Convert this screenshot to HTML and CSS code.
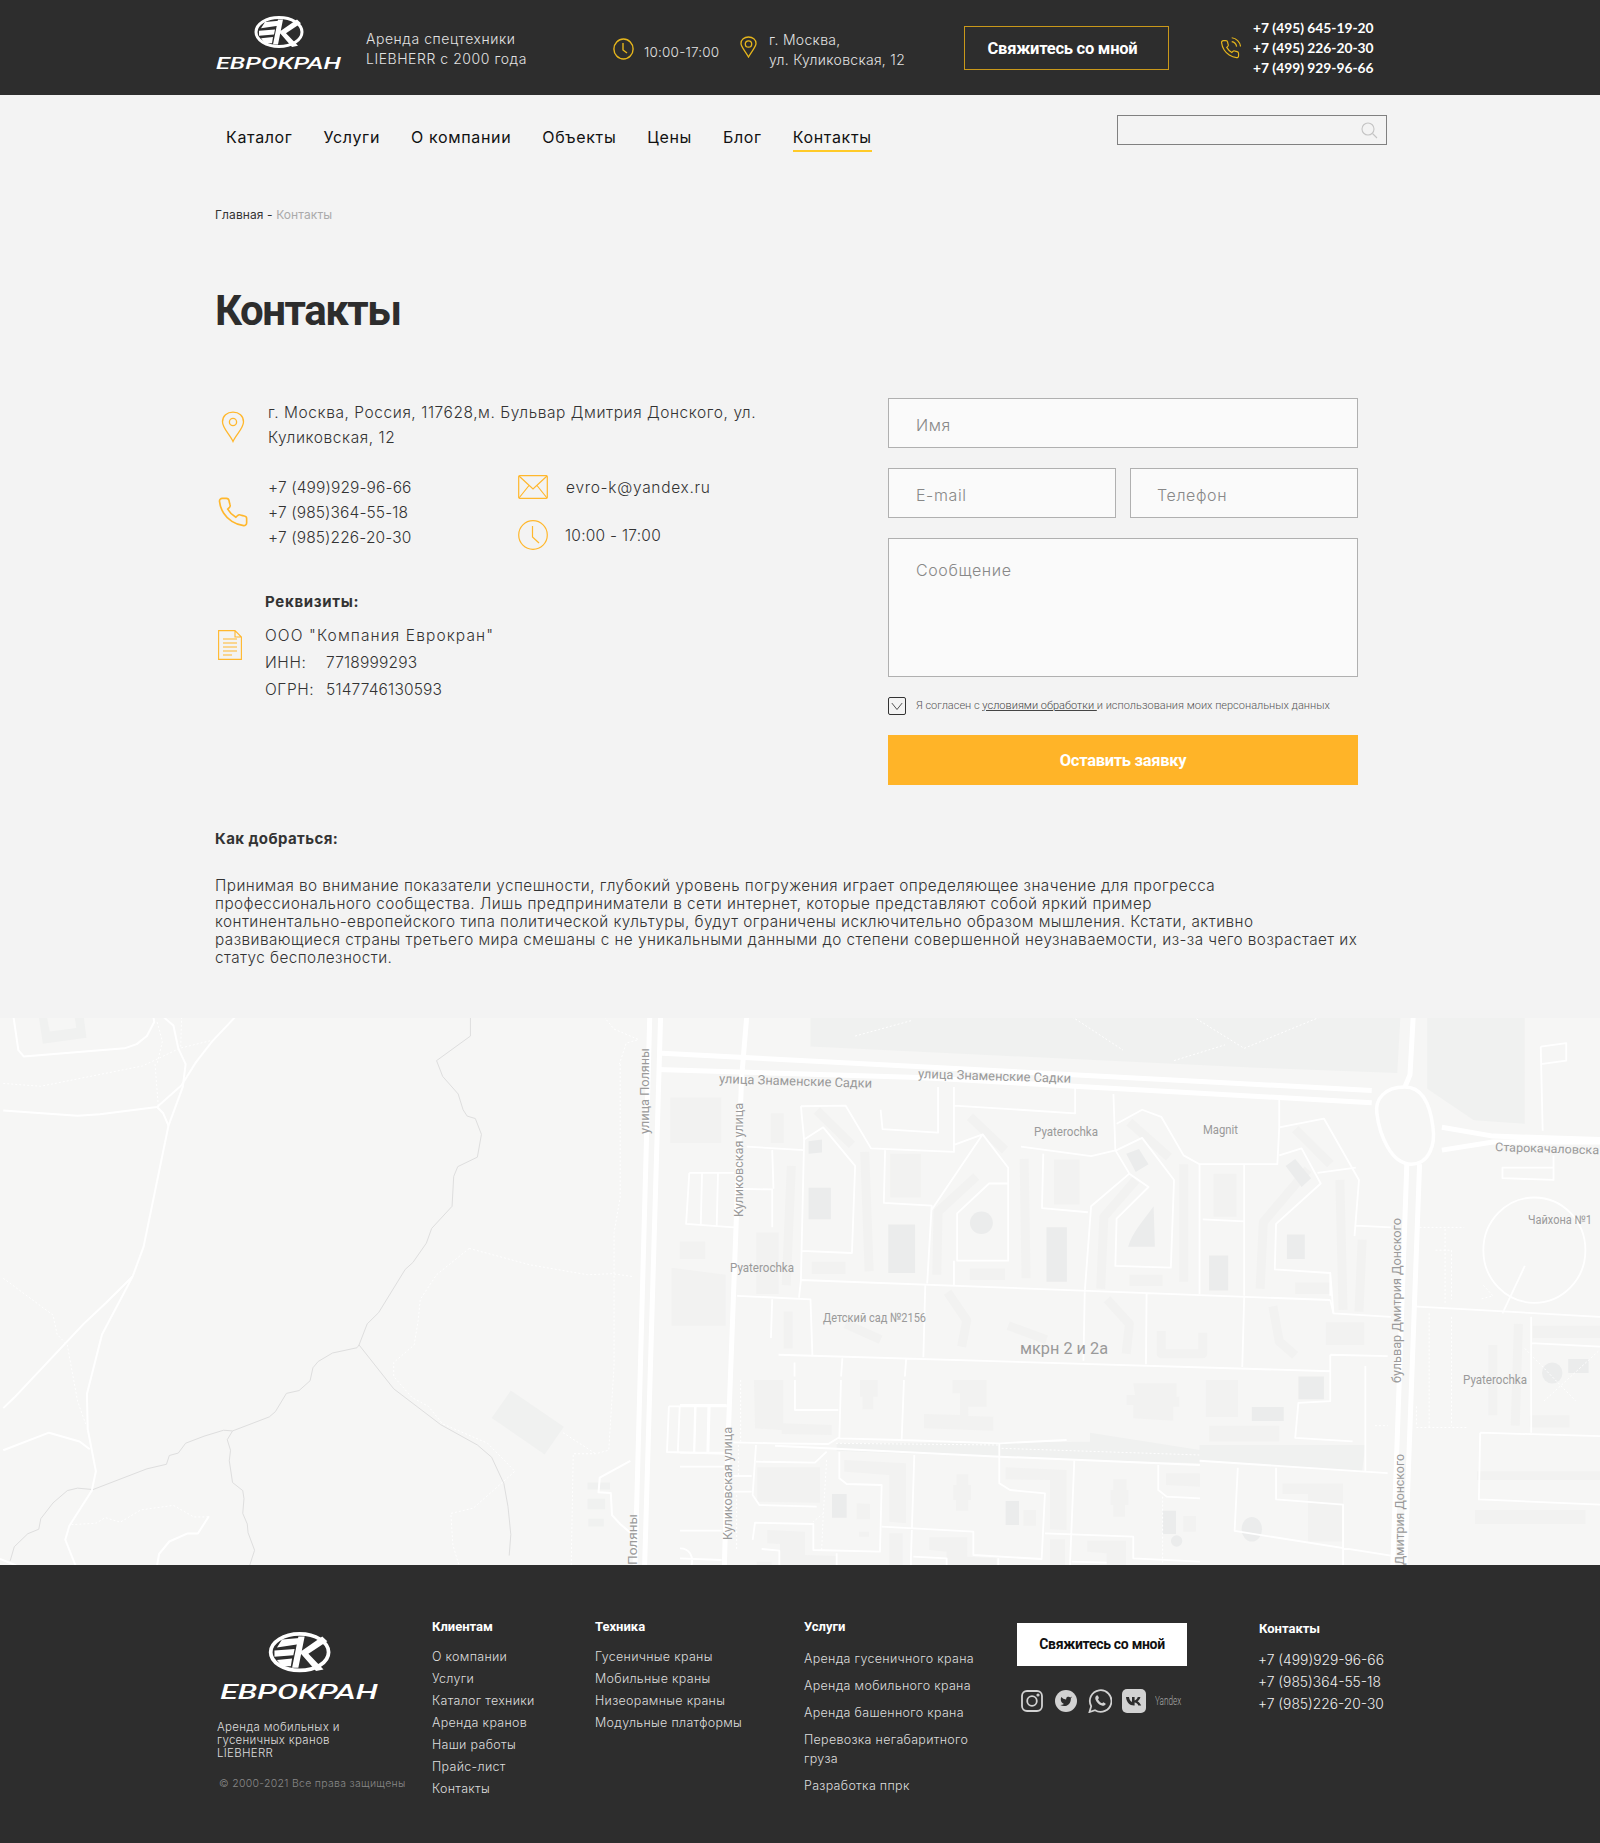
FILE: index.html
```html
<!DOCTYPE html>
<html lang="ru">
<head>
    <meta charset="UTF-8">
    <meta name="viewport" content="width=device-width, initial-scale=1.0">
    <title>Контакты - Еврокран</title>
    <link rel="stylesheet" href="styles.css">
</head>
<body>
    <header class="top">
        <div class="wrap top-row">
            <svg class="top-logo" viewBox="0 0 127 58">
                <ellipse cx="64" cy="16" rx="23" ry="14.500" fill="none" stroke="#fff" stroke-width="3"/>
                <g transform="translate(0,-1.500) scale(1,1.25)">
                    <path fill="#fff" d="M50 6 L64 5 L63 9 L46 11 Z M44 13 L60 12 L59 16 L44 17 Z M46 19 L58 18 L57 23 L50 23 Z"/>
                    <path fill="#fff" d="M63 4 L68 4 L63 24 L58 24 Z M64 14 L82 4 L86 7 L71 15 L83 25 L77 26 Z"/>
                </g>
                <text class="logo-word" x="1" y="53" textLength="125" lengthAdjust="spacingAndGlyphs">ЕВРОКРАН</text>
            </svg>
            <div class="tagline">Аренда спецтехники<br>LIEBHERR с 2000 года</div>
            <svg class="ic-clock" viewBox="0 0 21 22" fill="none" stroke="#e6b61c" stroke-width="1.4">
                <ellipse cx="10.5" cy="11" rx="9.6" ry="10"/>
                <path d="M10 5 V12 L14 15"/>
            </svg>
            <div class="top-hours">10:00-17:00</div>
            <svg class="ic-pin" viewBox="0 0 17 22" fill="none" stroke="#e6b61c" stroke-width="1.3">
                <path d="M8.5 21 C6 16 1 11 1 7.5 C1 3.5 4.3 1 8.5 1 C12.7 1 16 3.5 16 7.5 C16 11 11 16 8.5 21 Z"/>
                <circle cx="8.5" cy="8" r="3.2"/>
            </svg>
            <div class="top-addr">г. Москва,<br>ул. Куликовская, 12</div>
            <a class="btn-call" href="#">Свяжитесь со мной</a>
            <svg class="ic-phone" viewBox="2 1 21.500 22" fill="none" stroke="#e6b61c" stroke-width="1.2">
                <path d="M21 17.500v2.600a1.800 1.800 0 0 1-2 1.800 17 17 0 0 1-7.500-2.700 17 17 0 0 1-5.200-5.200 17 17 0 0 1-2.700-7.500A1.800 1.800 0 0 1 5.400 4.500H8a1.800 1.800 0 0 1 1.800 1.500c.1.900.3 1.700.6 2.400a1.800 1.800 0 0 1-.4 1.900L8.900 11.400a14 14 0 0 0 5.200 5.200l1.100-1.100a1.800 1.800 0 0 1 1.900-.4c.8.3 1.600.5 2.400.6a1.800 1.800 0 0 1 1.500 1.800z"/>
                <path d="M14 5.500a6 6 0 0 1 5 5M14 1.500a10 10 0 0 1 9 9"/>
            </svg>
            <div class="top-phones">+7 (495) 645-19-20<br>+7 (495) 226-20-30<br>+7 (499) 929-96-66</div>
        </div>
    </header>

    <nav class="wrap nav">
        <ul class="menu">
            <li><a href="#">Каталог</a></li>
            <li><a href="#">Услуги</a></li>
            <li><a href="#">О компании</a></li>
            <li><a href="#">Объекты</a></li>
            <li><a href="#">Цены</a></li>
            <li><a href="#">Блог</a></li>
            <li><a class="active" href="#">Контакты</a></li>
        </ul>
        <div class="search">
            <svg viewBox="0 0 17 17" fill="none" stroke="#c4c4c4" stroke-width="1.1">
                <circle cx="7" cy="7" r="6"/>
                <path d="M11.5 11.5 L16 16"/>
            </svg>
        </div>
    </nav>

    <main class="wrap">
        <div class="crumbs"><a href="#">Главная</a> - <span>Контакты</span></div>
        <h1>Контакты</h1>

        <section class="contacts">
            <div class="info">
                <div class="info-row">
                    <svg class="i-pin" viewBox="0 0 24 32" fill="none" stroke="#ffb72c" stroke-width="1.3">
                        <path d="M12 30.5 C9 24 1.5 17 1.5 11 C1.5 5 6 1.2 12 1.2 C18 1.2 22.5 5 22.5 11 C22.5 17 15 24 12 30.5 Z"/>
                        <circle cx="12" cy="11" r="3.6"/>
                    </svg>
                    <p class="addr">г. Москва, Россия, 117628,м. Бульвар Дмитрия Донского, ул. Куликовская, 12</p>
                </div>
                <div class="info-grid">
                    <div class="phones">
                        <svg class="i-phone" viewBox="1 1 22 22" fill="none" stroke="#ffb72c" stroke-width="1.2">
                            <path d="M22 17v3a2 2 0 0 1-2.200 2 19.800 19.800 0 0 1-8.600-3.100 19.500 19.500 0 0 1-6-6A19.800 19.800 0 0 1 2.100 4.200 2 2 0 0 1 4.100 2h3a2 2 0 0 1 2 1.700c.1 1 .4 1.900.7 2.800a2 2 0 0 1-.4 2.100L8.100 9.900a16 16 0 0 0 6 6l1.300-1.300a2 2 0 0 1 2.100-.4c.9.3 1.800.6 2.800.7A2 2 0 0 1 22 17z"/>
                        </svg>
                        <div class="phone-list">+7 (499)929-96-66<br>+7 (985)364-55-18<br>+7 (985)226-20-30</div>
                    </div>
                    <div class="reach">
                        <div class="mail">
                            <svg viewBox="0 0 30 24" fill="none" stroke="#ffb72c" stroke-width="1.2">
                                <rect x=".7" y=".7" width="28.600" height="22.600" rx="1"/>
                                <path d="M1 1 L15 14 L29 1 M1 23 L11 10.500 M29 23 L19 10.500"/>
                            </svg>
                            <span>evro-k@yandex.ru</span>
                        </div>
                        <div class="hours">
                            <svg viewBox="0 0 30 30" fill="none" stroke="#ffb72c" stroke-width="1.2">
                                <circle cx="15" cy="15" r="14.300"/>
                                <path d="M14.500 6 V17 L21 23"/>
                            </svg>
                            <span>10:00 - 17:00</span>
                        </div>
                    </div>
                </div>
                <div class="req">
                    <svg class="i-doc" viewBox="0 0 24 30" fill="none" stroke="#ffb72c" stroke-width="1.100">
                        <path d="M.6 .6 H17 L23.400 7 V29.400 H.6 Z M17 .6 V7 H23.400"/>
                        <path d="M5 9 H19 M5 13 H19 M5 17 H19 M5 21 H19 M5 25 H14"/>
                    </svg>
                    <div class="req-text">
                        <h3>Реквизиты:</h3>
                        <div class="req-lines">
                            <div class="req-name">ООО "Компания Еврокран"</div>
                            <div><span class="req-key">ИНН:</span>7718999293</div>
                            <div><span class="req-key">ОГРН:</span>5147746130593</div>
                        </div>
                    </div>
                </div>
            </div>

            <form class="form">
                <input type="text" placeholder="Имя">
                <div class="form-two">
                    <input type="text" placeholder="E-mail">
                    <input type="text" placeholder="Телефон">
                </div>
                <textarea placeholder="Сообщение"></textarea>
                <div class="agree">
                    <span class="check">
                        <svg viewBox="0 0 14 10" fill="none" stroke="#333" stroke-width="1"><path d="M1 1 L7 8.500 L13 1"/></svg>
                    </span>
                    <span>Я согласен с <a href="#">условиями обработки </a>и использования моих персональных данных</span>
                </div>
                <button type="button" class="btn-send">Оставить заявку</button>
            </form>
        </section>

        <h3 class="how">Как добраться:</h3>
        <p class="how-text">Принимая во внимание показатели успешности, глубокий уровень погружения играет определяющее значение для прогресса<br>профессионального сообщества. Лишь предприниматели в сети интернет, которые представляют собой яркий пример<br>континентально-европейского типа политической культуры, будут ограничены исключительно образом мышления. Кстати, активно<br>развивающиеся страны третьего мира смешаны с не уникальными данными до степени совершенной неузнаваемости, из-за чего возрастает их<br>статус бесполезности.</p>
    </main>

    <div class="map">
        <svg viewBox="0 0 1600 547" width="1600" height="547">
            <!-- left part, coordinates taken at 2.45 x 2.85 -->
            <g transform="translate(0,-3) scale(.408,.351)">
                <path class="b1" d="M95,5 L105,82 L212,65 L205,5 L183,5 L187,37 L122,47 L115,5 Z"/>
                <path class="b1" d="M1252,1070 L1382,1173 L1335,1252 L1205,1148 Z"/>
                <path class="b1" d="M1440,1332 H1495 V1352 H1440 Z M1440,1378 H1483 V1408 H1440 Z M1442,1435 H1480 V1457 H1442 Z"/>
                <path class="line" d="M1153,5 L1153,60 L1070,130 L1085,175 L1123,225 L1135,270 L1145,288 L1165,295 L1180,340 L1170,405 L1122,432 L1112,460 L1108,545 L1058,608 L1045,650 L1012,705 L993,725 L928,848 L900,880 L880,940 L875,948 L815,963 L780,987 L767,1005 L760,1042 L733,1070 L702,1078 L675,1130 L660,1145 L570,1185 L548,1183 L500,1200 L455,1220 L437,1248 L415,1255 L408,1280 L360,1293 L228,1352 L190,1348 L165,1355 L130,1390 L100,1435 L95,1465 L68,1478 L35,1515 L25,1555"/>
                <path class="line" d="M880,940 L965,1065 L1080,1167 L1170,1225 L1205,1260 L1235,1335 L1245,1400 L1252,1480 L1248,1540"/>
                <path class="line" d="M570,1185 L557,1210 L565,1240 L562,1270 L570,1332 L595,1355 L598,1378 L595,1420 L606,1450 L608,1475 L624,1525 L612,1568"/>
                <path class="trail" d="M8,195 L100,203 L350,145 L440,95 L520,72 M380,140 L388,260 M385,20 L398,75 L385,140 M445,5 L443,90 M8,750 L130,855 L140,910 L165,940 L190,1100 L210,1165"/>
                <path class="trail" d="M1150,665 L1070,740 L1030,810 L1025,870 L1015,940 L965,990 L965,1030 L1010,1090 L1050,1115 L1085,1165 L1195,1220 L1262,1300 L1160,1405 L1105,1420 L1110,1510 L1125,1568 M1150,665 L1300,712 L1440,740 L1500,737 L1550,745"/>
                <path class="trail" d="M1520,140 L1520,520 L1505,620 L1505,1000 L1492,1240 L1460,1250 L1405,1250 L1400,1568 M1380,1190 L1460,1250 M1480,5 L1505,40 L1565,70 L1535,80 L1518,140 M175,1452 L235,1448 L258,1432 L295,1445 L345,1410 L425,1397 L475,1430 L510,1430"/>
                <path class="road" d="M33,5 L45,100 L58,118 L305,95 L335,83 L360,60 L378,20 L376,5"/>
                <path class="road" d="M8,272 L190,287 L245,283 L385,262 L445,200 L480,135 L520,75 L577,5"/>
                <path class="road" d="M400,5 L425,30 L437,95 L455,140 L448,205 L413,315 L352,660 L325,745 L250,910 L213,1080 L215,1180 L235,1300 L225,1355 L170,1455 L160,1495 L185,1568"/>
                <path class="road" d="M385,262 L400,280 L413,315 M8,1120 L35,1090 L205,880 L260,820 L325,745 M8,1240 L120,1190 L195,1215 L220,1237 M385,1568 L390,1535 L415,1500 L460,1477 L485,1477 L512,1428 M1545,1270 L1470,1318 L1467,1360 L1497,1362 L1500,1425 L1520,1450 L1545,1475 M0,1550 L40,1568"/>
            </g>

            <!-- lower blocks, coordinates taken at 3 x 3 -->
            <g transform="translate(680,362) scale(.3333)">
                <path class="b1" d="M470,190 L1230,185 V158 L1560,210 V250 L960,232 L470,212 Z"/>
                <path class="b2" d="M222,0 H310 V130 L455,135 V165 L305,162 V150 L225,145 Z M232,262 H420 V368 L232,365 Z M493,240 L678,250 V430 L628,425 V285 L493,275 Z M977,262 L1160,270 V450 L1110,448 V300 L977,298 Z M1458,280 H1560 V320 L1458,315 Z"/>
                <path class="b2" d="M540,0 H593 V50 H580 V88 H548 V50 H540 Z M818,0 H920 V80 H865 V108 L940,110 V152 L732,145 V102 L840,105 V40 H818 Z M830,283 H865 V315 H873 V360 H865 V392 H828 V360 H820 V315 H830 Z M1300,298 H1340 V330 H1345 V375 H1335 V410 H1300 V375 H1292 V330 H1300 Z M1360,10 H1490 V50 H1498 V80 H1480 V122 L1360,115 V75 H1340 V45 H1365 Z"/>
                <path class="b2" d="M530,370 L570,372 V418 H530 Z M1030,390 H1068 V437 H1030 Z M1510,408 H1548 V455 H1510 Z M537,455 H567 V470 H537 Z M262,450 L375,455 V525 L470,528 V555 H300 V492 L262,490 Z M628,460 H668 V555 H628 Z M748,472 H862 V530 L950,535 V555 H800 V515 L748,510 Z M1110,478 H1155 V555 H1110 Z M1222,482 H1338 V555 H1280 V520 L1222,515 Z M230,545 H275 V555 H230 Z"/>
                <path class="b3" d="M456,342 H500 V413 H456 Z M977,363 H1017 V435 H977 Z M1448,392 H1488 V462 H1448 Z"/>
                <circle class="b3" cx="1490" cy="483" r="17"/>
                <path class="trail" d="M468,190 L955,195 M965,205 L1560,225 M182,0 V185 M175,195 V290 M170,345 V510 M440,240 L430,400 L425,510 M430,400 L400,425 M1448,350 V550"/>
                <path class="road-thin" d="M345,0 V90 L475,90 M483,0 L478,175 L665,180 L672,0 M160,187 L285,190 L445,192 L478,172 M665,180 L960,190 L1160,180 M228,195 L218,345 L238,375 L410,380 M228,245 L405,248 L440,215 M478,215 V295 L500,312 L605,315 L600,515 L400,510 V432 L225,428 L218,480"/>
                <path class="road-thin" d="M703,225 L693,530 V555 M605,440 L880,455 V525 L1085,537 L1095,340 L990,330 L958,310 V190 M1183,242 L1170,555 M1095,460 L1360,470 V535 L1560,545 M1435,255 V330 L1460,350 L1560,355 M160,288 H215 M160,335 H215 M0,75 H140 M0,218 H140 M0,260 H140 M0,452 H125 M45,80 L42,215 M85,80 L82,215 M0,505 C30,505 40,530 35,555 M0,535 L125,540 M245,507 L298,512 V555 M470,520 V555 M700,530 L800,535 V555 M955,535 V555 M1175,545 L1280,548"/>
                <path class="road" d="M285,197 L960,230 L1560,255"/>
            </g>

            <!-- right part, coordinates taken at 1.568 x 2.85 -->
            <g transform="translate(600,-3) scale(.6378,.351)">
                <path class="b1" d="M330,5 H1255 L1250,165 L1030,150 L330,90 Z M1297,5 H1450 V310 L1370,300 L1297,210 Z M940,1225 L1200,1225 L1195,1300 L940,1270 Z"/>
                <path class="b2" d="M110,235 H190 V365 H110 Z M112,720 L197,740 V885 H112 Z M125,645 H165 V695 H125 Z M245,620 H280 V795 H245 Z M268,280 H288 V365 H268 Z M332,703 H385 V738 H332 Z M580,722 H635 V755 H580 Z M830,740 H882 V772 H830 Z M1090,762 H1145 V795 H1090 Z M1138,875 H1198 V940 H1138 Z M962,452 H998 V575 H962 Z M455,395 H503 V520 H455 Z M712,412 H752 V540 H712 Z"/>
                <path class="b2" d="M950,1040 H1000 V1145 H950 Z M955,1170 H1065 V1215 H955 Z M1458,1140 H1520 V1175 H1458 Z M1372,1410 H1545 V1450 H1372 Z M1375,1300 H1568 V1325 H1375 Z M1462,885 H1568 V920 H1462 Z M1070,1335 H1165 V1500 H1110 V1365 H1070 Z"/>
                <path class="b2line" d="M340,272 L395,370 M415,390 L422,730 M300,430 L292,770 M580,290 L635,385 M665,410 L668,750 M590,460 L530,560 L528,740 M830,305 L892,405 M915,425 L915,760 M840,470 L790,575 L785,780 M1090,325 L1145,425 M1160,470 L1165,840 M1110,440 L1040,590 L1035,780 M1195,640 L1190,845 M1400,940 L1400,1140 M1440,880 L1435,1170"/>
                <path class="b2line" d="M545,790 L575,870 L567,945 M795,810 L830,880 L825,965 M1055,830 L1065,930 L1090,970 M295,845 V950 M640,885 L700,925 M880,900 V965 L945,965 V905 M385,880 L440,925"/>
                <path class="b3" d="M327,492 H362 V582 H327 Z M452,597 H494 V735 H452 Z M700,605 H732 V760 H700 Z M955,685 H985 V785 H955 Z M1077,625 H1105 V695 H1077 Z M1095,1030 H1135 V1095 H1095 Z M1022,1117 H1072 V1157 H1022 Z M828,660 H870 L868,545 C850,590 835,620 828,660 Z M1075,430 L1090,410 L1115,465 L1100,490 Z M825,395 L845,382 L860,425 L840,447 Z M1518,980 H1550 V1020 H1518 Z M327,360 L348,355 V392 L327,395 Z"/>
                <ellipse class="b3" cx="598" cy="592" rx="18" ry="32"/>
                <ellipse class="b3" cx="1493" cy="1020" rx="16" ry="30"/>
                <ellipse class="b3" cx="1022" cy="1465" rx="16" ry="35"/>
                <path class="road-thin" d="M315,755 L1145,812 M1275,830 L1568,860 M280,968 L1145,1015 M215,800 L330,810 L333,968 M270,810 L268,920 M315,755 L312,805 M510,770 L507,975 M760,790 L758,985 M857,795 L856,995 M1010,805 L1007,1003 M1145,812 L1150,850 L1240,860 M1145,968 L1235,972 M1145,968 V1100 L1095,1105 L1090,1205 L1180,1215 M380,978 L378,1030 M480,980 L478,1030 M305,990 V1030"/>
                <path class="road-thin" d="M108,1115 H200 M108,1115 L105,1245 L200,1250 M150,1115 L148,1245 M125,1115 L122,1245 M172,1115 L170,1248 M140,450 H210 M140,450 L135,595 L210,605 M160,450 L158,598 M185,450 L183,600 M230,375 L320,385 M215,495 L270,497 L270,605 M270,385 L272,495"/>
                <path class="road-thin" d="M315,260 L385,258 L425,380 L555,390 L555,205 M315,260 L320,355 L350,320 L400,430 L395,678 L315,672 M320,355 L315,755 M440,270 L443,325 L530,335 L530,205 M447,385 L445,535 L520,543 L513,765 M555,258 L745,280 L745,205 M600,340 L640,435 V700 H560 V565 L610,480 H640 M555,370 L600,340 L520,555 M555,700 V770"/>
                <path class="road-thin" d="M660,375 L770,402 L810,385 L850,350 L900,470 L895,720 L808,715 L810,580 L860,490 L830,452 L770,545 L760,790 M695,395 L693,550 L765,562 M805,225 L808,385 L830,452 M810,310 L850,270 L880,290 L915,400 L940,425 H1062 L1065,320 L1135,295 L1190,470 L1183,630 M940,425 V795 M1010,425 V800 M945,582 L1010,588 M1065,400 L1100,380 L1130,480 L1060,595 L1058,725 L1145,735 V800 M1125,450 L1185,435 M1065,240 V320 M1185,600 L1240,605 M1145,735 L1150,850"/>
                <path class="road-thin" d="M940,1270 L1235,1305 M1000,1290 L995,1470 L1240,1540 M1060,1290 V1380 L1165,1395 V1568 M1380,1190 L1568,1200 M1380,1190 L1378,1380 L1568,1395 M1460,860 V1190 M1460,935 L1568,945 M1415,435 H1495 V470 L1415,465 Z M1495,400 V470 M1475,90 L1515,80 V130 L1475,140 M1475,90 L1478,330 M1200,1000 V1300"/>
                <ellipse class="road-thin" cx="1465" cy="670" rx="80" ry="150"/>
                <path class="road-thin" d="M1450,715 L1415,850"/>
                <path class="trail" d="M400,60 L490,15 M740,5 L820,100 M930,5 L1010,95 L1130,5 M900,130 L980,85 M1285,605 H1355 M1325,610 V820 M1310,670 H1335 V810 M1300,850 V1180 M1335,860 V1170 M1280,1175 H1360 M1280,1115 V1170 M1215,1170 H1235 M1385,770 L1400,800 L1380,810 M1450,950 L1530,1100 M1570,950 L1480,1100"/>
                <path class="road-wide" d="M90,108 L1210,215 M90,155 L500,178 L1210,250"/>
                <path class="road-wide" d="M78,5 L55,1568 M95,5 L70,1568"/>
                <path class="road-wide" d="M230,5 L222,180 L200,1250 L195,1568"/>
                <path class="road-wide" d="M1275,5 L1270,170 L1262,205 M1265,425 L1243,1568 M1285,425 L1262,1568 M1320,320 L1400,345 L1568,355 M1320,385 L1400,362 L1568,362"/>
                <path class="road-ring" d="M1262,205 C1230,205 1215,240 1218,280 C1222,340 1240,425 1272,425 C1300,425 1310,370 1306,320 C1302,260 1290,205 1262,205 Z"/>
            </g>

            <text class="lbl" transform="translate(719,65) rotate(1.800)" textLength="153" lengthAdjust="spacingAndGlyphs">улица Знаменские Садки</text>
            <text class="lbl" transform="translate(918,60) rotate(1.800)" textLength="153" lengthAdjust="spacingAndGlyphs">улица Знаменские Садки</text>
            <text class="lbl" transform="translate(649,116) rotate(-90)" textLength="86" lengthAdjust="spacingAndGlyphs">улица Поляны</text>
            <text class="lbl" transform="translate(637,547) rotate(-90)" textLength="51" lengthAdjust="spacingAndGlyphs">Поляны</text>
            <text class="lbl" transform="translate(743,199) rotate(-90)" textLength="114" lengthAdjust="spacingAndGlyphs">Куликовская улица</text>
            <text class="lbl" transform="translate(732,522) rotate(-90)" textLength="113" lengthAdjust="spacingAndGlyphs">Куликовская улица</text>
            <text class="lbl" transform="translate(1401,365) rotate(-90)" textLength="165" lengthAdjust="spacingAndGlyphs">бульвар Дмитрия Донского</text>
            <text class="lbl" transform="translate(1404,547) rotate(-90)" textLength="111" lengthAdjust="spacingAndGlyphs">Дмитрия Донского</text>
            <text class="lbl" x="1034" y="118" textLength="64" lengthAdjust="spacingAndGlyphs">Pyaterochka</text>
            <text class="lbl" x="1203" y="116" textLength="35" lengthAdjust="spacingAndGlyphs">Magnit</text>
            <text class="lbl lbl-small" transform="translate(1495,133) rotate(1.800)" textLength="104" lengthAdjust="spacingAndGlyphs">Старокачаловска</text>
            <text class="lbl lbl-small" x="1528" y="206" textLength="64" lengthAdjust="spacingAndGlyphs">Чайхона №1</text>
            <text class="lbl" x="730" y="254" textLength="64" lengthAdjust="spacingAndGlyphs">Pyaterochka</text>
            <text class="lbl" x="823" y="304" textLength="103" lengthAdjust="spacingAndGlyphs">Детский сад №2156</text>
            <text class="lbl lbl-big" x="1020" y="336" textLength="88" lengthAdjust="spacingAndGlyphs">мкрн 2 и 2а</text>
            <text class="lbl" x="1463" y="366" textLength="64" lengthAdjust="spacingAndGlyphs">Pyaterochka</text>
        </svg>
    </div>

    <footer class="foot">
        <div class="wrap foot-row">
            <div class="foot-brand">
                <svg class="foot-logo" viewBox="0 0 127 58">
                    <ellipse cx="64" cy="16" rx="23" ry="14.500" fill="none" stroke="#fff" stroke-width="3"/>
                    <g transform="translate(0,-1.500) scale(1,1.25)">
                        <path fill="#fff" d="M50 6 L64 5 L63 9 L46 11 Z M44 13 L60 12 L59 16 L44 17 Z M46 19 L58 18 L57 23 L50 23 Z"/>
                        <path fill="#fff" d="M63 4 L68 4 L63 24 L58 24 Z M64 14 L82 4 L86 7 L71 15 L83 25 L77 26 Z"/>
                    </g>
                    <text class="logo-word" x="1" y="53" textLength="125" lengthAdjust="spacingAndGlyphs">ЕВРОКРАН</text>
                </svg>
                <p class="foot-about">Аренда мобильных и<br>гусеничных кранов<br>LIEBHERR</p>
                <p class="copy">© 2000-2021 Все права защищены</p>
            </div>
            <div class="foot-col col-clients">
                <h4>Клиентам</h4>
                <a href="#">О компании</a>
                <a href="#">Услуги</a>
                <a href="#">Каталог техники</a>
                <a href="#">Аренда кранов</a>
                <a href="#">Наши работы</a>
                <a href="#">Прайс-лист</a>
                <a href="#">Контакты</a>
            </div>
            <div class="foot-col col-tech">
                <h4>Техника</h4>
                <a href="#">Гусеничные краны</a>
                <a href="#">Мобильные краны</a>
                <a href="#">Низеорамные краны</a>
                <a href="#">Модульные платформы</a>
            </div>
            <div class="foot-col col-serv">
                <h4>Услуги</h4>
                <a href="#">Аренда гусеничного крана</a>
                <a href="#">Аренда мобильного крана</a>
                <a href="#">Аренда башенного крана</a>
                <a href="#">Перевозка негабаритного груза</a>
                <a href="#">Разработка ппрк</a>
            </div>
            <div class="foot-call">
                <a class="btn-white" href="#">Свяжитесь со мной</a>
                <div class="social">
                    <svg class="s-insta" viewBox="0 0 22 22" fill="none" stroke="#d2d2d2" stroke-width="1.800">
                        <rect x="1" y="1" width="20" height="20" rx="5"/>
                        <circle cx="11" cy="11" r="4.800"/>
                        <circle cx="17" cy="5" r=".7"/>
                    </svg>
                    <svg class="s-tw" viewBox="0 0 22 22">
                        <circle cx="11" cy="11" r="11" fill="#d2d2d2"/>
                        <path fill="#2d2d2d" transform="translate(4.700,5) scale(.53)" d="M23 3a10.900 10.900 0 0 1-3 1.700 4.480 4.480 0 0 0-7.860 3v1A10.660 10.660 0 0 1 3 4s-4 9 5 13a11.640 11.640 0 0 1-7 2c9 5 20 0 20-11.500a4.500 4.500 0 0 0-.08-.83A7.720 7.720 0 0 0 23 3z"/>
                    </svg>
                    <svg class="s-wa" viewBox="0 0 24 24" fill="none">
                        <path stroke="#d2d2d2" stroke-width="1.800" d="M1.500 23 L3.200 17.200 A10.800 10.800 0 1 1 7 21.200 Z"/>
                        <path fill="#d2d2d2" d="M8.600 6.500 C7.400 7.300 6.900 8.800 7.500 10.500 C8.500 13.300 10.900 15.700 13.800 16.600 C15.500 17.100 16.900 16.600 17.600 15.300 L17.500 14.400 L15.300 13.200 L14.200 14.300 C12.500 13.700 10.700 12 10 10.200 L11 9 L9.900 6.600 Z"/>
                    </svg>
                    <svg class="s-vk" viewBox="0 0 24 24">
                        <rect width="24" height="24" rx="5" fill="#d2d2d2"/>
                        <path fill="#2d2d2d" d="M4 8 H7 C7.300 10.500 8.500 12.500 10 13 V8 H12.600 V11.500 C14 11.300 15.200 9.800 15.800 8 H18.400 C18 10 16.800 11.500 15.600 12.400 C16.900 13 18.400 14.400 19.200 16.500 H16.300 C15.700 15 14.300 13.800 12.600 13.600 V16.500 H12 C7.500 16.500 4.500 13.300 4 8 Z"/>
                    </svg>
                    <span class="s-ya">Yandex</span>
                </div>
            </div>
            <div class="foot-contacts">
                <h4>Контакты</h4>
                <div class="foot-phones">+7 (499)929-96-66<br>+7 (985)364-55-18<br>+7 (985)226-20-30</div>
            </div>
        </div>
    </footer>
</body>
</html>
```

FILE: styles.css
```css
* {
    box-sizing: border-box;
}
body {
    margin: 0;
    background: #f3f3f3;
    color: #333;
    font-family: Inter, "Noto Sans", sans-serif;
    font-size: 15px;
    font-weight: 300;
    letter-spacing: .4px;
}
a {
    color: inherit;
    text-decoration: none;
}
h1, h3, h4, p, ul {
    margin: 0;
    padding: 0;
}
.logo-word {
    font-family: Roboto, sans-serif;
    font-size: 16px;
    font-weight: 500;
    font-style: italic;
    letter-spacing: 0;
    fill: #fff;
}
.wrap {
    width: 1172px;
    margin-left: 215px;
}

/* header */
.top {
    height: 95px;
    background: #2d2d2d;
    color: #e2e2e2;
}
.top-row {
    display: flex;
    align-items: center;
    height: 95px;
    font-size: 14px;
    line-height: 20px;
}
.top-logo {
    width: 127px;
    height: 58px;
    margin-top: -6px;
    flex: none;
}
.tagline {
    width: 247px;
    margin-left: 24px;
    margin-top: 3px;
    letter-spacing: .55px;
}
.ic-clock {
    width: 21px;
    height: 22px;
    margin-top: 3px;
    flex: none;
}
.top-hours {
    width: 96px;
    margin-left: 10px;
    margin-top: 9px;
    font-size: 13.500px;
    letter-spacing: .2px;
}
.ic-pin {
    width: 17px;
    height: 22px;
    margin-top: -2px;
    flex: none;
}
.top-addr {
    width: 195px;
    margin-left: 12px;
    margin-top: 5px;
    letter-spacing: .3px;
}
.btn-call {
    width: 205px;
    height: 44px;
    margin-top: 1px;
    padding-right: 8px;
    border: 1px solid #c9981a;
    color: #fff;
    font-family: Roboto, sans-serif;
    font-size: 16.500px;
    font-weight: 700;
    letter-spacing: -.25px;
    line-height: 43px;
    text-align: center;
    flex: none;
}
.ic-phone {
    width: 21px;
    height: 22px;
    margin-left: 51px;
    flex: none;
}
.top-phones {
    margin-left: 12px;
    color: #fff;
    font-family: Lato, Roboto, sans-serif;
    font-size: 13.800px;
    font-weight: 700;
    letter-spacing: 0;
    white-space: nowrap;
}

/* nav */
.nav {
    display: flex;
    justify-content: space-between;
    padding-top: 20px;
}
.menu {
    display: flex;
    gap: 31px;
    margin-top: 12px;
    margin-left: 11px;
    list-style: none;
    color: #111;
    font-size: 16px;
    font-weight: 400;
    letter-spacing: .65px;
    line-height: 20px;
}
.menu a {
    display: block;
    padding-bottom: 3px;
    border-bottom: 2px solid transparent;
}
.menu a.active {
    border-bottom-color: #ffca28;
}
.search {
    display: flex;
    align-items: center;
    justify-content: flex-end;
    width: 270px;
    height: 30px;
    padding-right: 8px;
    border: 1px solid #808080;
}
.search svg {
    width: 17px;
    height: 17px;
}

/* main */
.crumbs {
    margin-top: 55px;
    color: #333;
    font-size: 12px;
    font-weight: 400;
    letter-spacing: .1px;
    line-height: 16px;
}
.crumbs span {
    color: #aaa;
}
h1 {
    margin-top: 63px;
    color: #2d2d2d;
    font-family: Roboto, sans-serif;
    font-size: 42px;
    font-weight: 700;
    letter-spacing: -1.500px;
    line-height: 50px;
}
.contacts {
    display: flex;
    justify-content: space-between;
    width: 1143px;
    margin-top: 62px;
    font-size: 15.500px;
}
.info {
    width: 560px;
    padding-top: 2px;
}
.info-row {
    display: flex;
}
.i-pin {
    width: 24px;
    height: 32px;
    margin: 11px 0 0 6px;
    flex: none;
}
.addr {
    width: 505px;
    margin-left: 23px;
    letter-spacing: .56px;
    line-height: 25px;
}
.info-grid {
    display: flex;
    margin-top: 24px;
}
.phones {
    display: flex;
    align-items: center;
    width: 303px;
}
.i-phone {
    width: 30px;
    height: 30px;
    margin-left: 3px;
    flex: none;
}
.phone-list {
    margin-left: 20px;
    letter-spacing: .12px;
    line-height: 25px;
}
.mail, .hours {
    display: flex;
    align-items: center;
}
.mail svg {
    width: 30px;
    height: 24px;
}
.mail span {
    margin-left: 18px;
    letter-spacing: .7px;
}
.mail {
    height: 24px;
    margin-top: 1px;
}
.hours {
    margin-top: 21px;
}
.hours svg {
    width: 30px;
    height: 30px;
}
.hours span {
    margin-left: 17px;
    letter-spacing: .25px;
}
.req {
    display: flex;
    margin-top: 42px;
}
.i-doc {
    width: 24px;
    height: 30px;
    margin: 38px 0 0 3px;
    flex: none;
}
.req-text {
    margin-left: 23px;
}
.req-text h3, .how {
    font-size: 15px;
    font-weight: 700;
    line-height: 20px;
}
.req-text h3 {
    letter-spacing: .7px;
}
.req-lines {
    margin-top: 10px;
    letter-spacing: .18px;
    line-height: 27px;
}
.req-name {
    letter-spacing: 1.100px;
}
.req-key {
    display: inline-block;
    width: 61px;
    letter-spacing: .6px;
}

/* form */
.form {
    width: 470px;
}
.form input, .form textarea {
    display: block;
    width: 100%;
    height: 50px;
    padding: 3px 27px 0;
    border: 1px solid #b0b0b0;
    border-radius: 0;
    background: #fafafa;
    color: #333;
    font-family: inherit;
    font-size: 16px;
    font-weight: 300;
    letter-spacing: .6px;
    outline: none;
}
.form input::placeholder, .form textarea::placeholder {
    color: #888;
}
.form-two {
    display: flex;
    justify-content: space-between;
    margin-top: 20px;
}
.form-two input {
    width: 228px;
}
.form-two input:last-child {
    padding-left: 26px;
}
.form textarea {
    height: 139px;
    margin-top: 20px;
    padding-top: 21px;
    resize: none;
}
.agree {
    display: flex;
    align-items: center;
    margin-top: 20px;
    color: #555;
    font-family: Roboto, sans-serif;
    font-size: 11px;
    font-weight: 300;
    letter-spacing: 0;
}
.agree span:last-child {
    margin-top: -2px;
}
.agree a {
    color: #444;
    text-decoration: underline;
}
.check {
    display: flex;
    align-items: center;
    justify-content: center;
    width: 18px;
    height: 18px;
    margin-right: 10px;
    border: 1px solid #333;
    border-radius: 2px;
}
.check svg {
    width: 12px;
    height: 9px;
}
.btn-send {
    display: block;
    width: 100%;
    height: 50px;
    margin-top: 20px;
    border: none;
    background: #ffb428;
    color: #fff;
    font-family: Roboto, sans-serif;
    font-size: 16.500px;
    font-weight: 700;
    letter-spacing: -.3px;
}
.how {
    margin-top: 44px;
}
.how-text {
    margin-top: 28px;
    font-size: 15.300px;
    letter-spacing: .45px;
    line-height: 18px;
    white-space: nowrap;
}

/* map */
.map {
    height: 547px;
    margin-top: 51px;
    background: #f6f6f5;
    overflow: hidden;
}
.map svg {
    display: block;
}
.map path, .map ellipse {
    vector-effect: non-scaling-stroke;
}
.road, .road-thin, .road-wide, .road-ring, .line, .trail, .b2line {
    fill: none;
    stroke-linejoin: round;
}
.road {
    stroke: #fff;
    stroke-width: 2;
}
.road-thin {
    fill: none;
    stroke: #fff;
    stroke-width: 1.800;
}
.road-wide {
    stroke: #fff;
    stroke-width: 5;
}
.road-ring {
    stroke: #fff;
    stroke-width: 3.500;
}
.line {
    stroke: #dedede;
    stroke-width: 1;
}
.trail {
    stroke: #fff;
    stroke-width: 1;
    stroke-dasharray: 2 2;
}
.b1 {
    fill: #f0f1f0;
}
.b2 {
    fill: #f2f2f1;
}
.b2line {
    stroke: #f2f2f1;
    stroke-width: 9;
}
.b3 {
    fill: #ebecec;
}
.lbl {
    fill: #9a9a9a;
    font-family: Roboto, sans-serif;
    font-size: 13px;
    font-weight: 400;
    letter-spacing: 0;
}
.lbl-small {
    font-size: 12px;
}
.lbl-big {
    font-size: 17px;
}

/* footer */
.foot {
    height: 278px;
    background: #2d2d2d;
    color: #ddd;
}
.foot-row {
    display: flex;
    padding-top: 50px;
    font-size: 12.500px;
    letter-spacing: .3px;
}
.foot h4 {
    margin-top: 2px;
    color: #fff;
    font-family: Roboto, sans-serif;
    font-size: 13px;
    font-weight: 700;
    letter-spacing: 0;
    line-height: 20px;
}
.foot-brand {
    width: 217px;
    padding-top: 17px;
    flex: none;
}
.foot-logo {
    display: block;
    width: 160px;
    height: 73px;
    margin-left: 4px;
}
.foot-about {
    margin-top: 16px;
    margin-left: 2px;
    font-size: 11.500px;
    line-height: 13px;
}
.copy {
    margin-top: 17px;
    margin-left: 4px;
    color: #888;
    font-size: 10.500px;
    line-height: 14px;
}
.foot-col {
    flex: none;
}
.foot-col a {
    display: block;
}
.col-clients {
    width: 163px;
}
.col-tech {
    width: 209px;
}
.col-clients h4, .col-tech h4 {
    margin-bottom: 9px;
}
.col-clients a, .col-tech a {
    line-height: 22px;
}
.col-serv {
    width: 213px;
    padding-right: 20px;
}
.col-serv h4 {
    margin-bottom: 12px;
}
.col-serv a {
    margin-bottom: 8px;
    line-height: 19px;
}
.foot-call {
    width: 241px;
    padding-top: 8px;
    flex: none;
}
.btn-white {
    display: block;
    width: 170px;
    height: 43px;
    background: #fff;
    color: #111;
    font-family: Roboto, sans-serif;
    font-size: 14px;
    font-weight: 700;
    letter-spacing: -.3px;
    line-height: 43px;
    text-align: center;
}
.social {
    display: flex;
    align-items: center;
    margin-top: 23px;
    margin-left: 4px;
}
.s-insta, .s-tw {
    width: 22px;
    height: 22px;
}
.s-tw {
    margin-left: 12px;
}
.s-wa {
    width: 24px;
    height: 24px;
    margin-left: 11px;
}
.s-vk {
    width: 24px;
    height: 24px;
    margin-left: 10px;
}
.s-ya {
    margin-left: 9px;
    color: #aaa;
    font-family: Roboto, sans-serif;
    font-size: 12px;
    letter-spacing: 0;
    transform: scaleX(.68);
    transform-origin: left center;
}
.foot-contacts {
    padding-top: 2px;
}
.foot-contacts h4 {
    margin-left: 1px;
}
.foot-phones {
    margin-top: 10px;
    color: #eee;
    font-size: 13.800px;
    letter-spacing: 0;
    line-height: 22px;
    white-space: nowrap;
}
```
